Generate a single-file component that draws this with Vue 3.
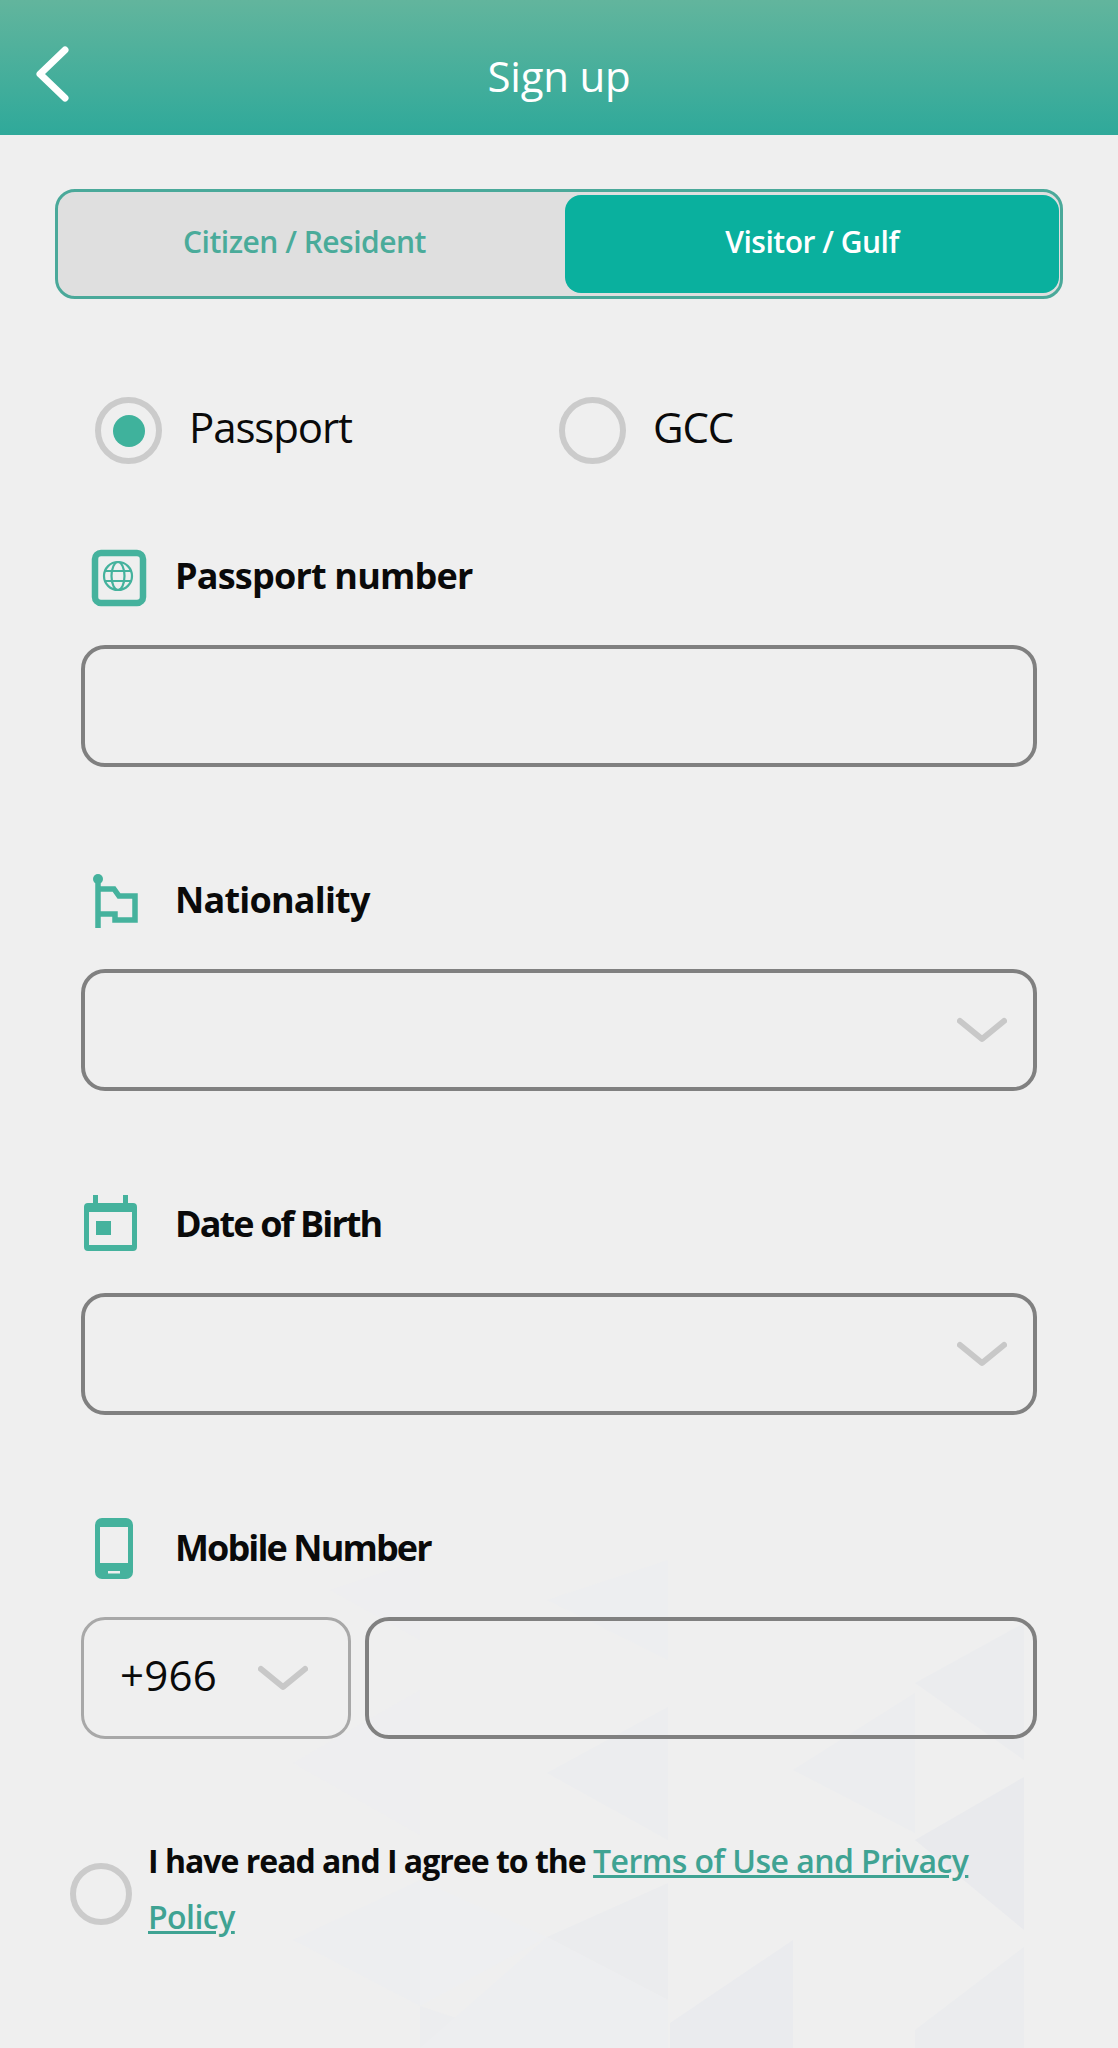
<script setup>
const triangles = [
  { points: '293,1763 420,1690 420,1835', fill: '#eeeef0' },
  { points: '330,1590 420,1560 420,1640', fill: '#eeeef0' },
  { points: '293,1940 420,1880 420,2006', fill: '#edeef0' },
  { points: '420,1880 547,1937 420,2006', fill: '#eeeff1' },
  { points: '420,2006 547,2048 420,2048', fill: '#ecedef' },
  { points: '547,1600 668,1560 668,1660', fill: '#edeef0' },
  { points: '547,1773 668,1707 668,1840', fill: '#ecedef' },
  { points: '547,1937 668,1883 668,2000', fill: '#ebecee' },
  { points: '547,1937 420,2048 668,2048 668,2000', fill: '#edeef0' },
  { points: '793,1770 915,1693 915,1833', fill: '#ecedef' },
  { points: '915,1683 1024,1623 1024,1760', fill: '#ebecee' },
  { points: '915,1840 1024,1777 1024,1930', fill: '#e9eaed' },
  { points: '670,2023 793,1940 793,2048 670,2048', fill: '#eaebee' },
  { points: '915,2030 1024,1947 1024,2048 915,2048', fill: '#ebecee' }
];
</script>

<template>
  <div class="page">
    <svg class="pattern" width="1118" height="2048" viewBox="0 0 1118 2048">
      <polygon v-for="t in triangles" :key="t.points" :points="t.points" :fill="t.fill" />
    </svg>

    <header class="top-bar">
      <svg class="back" width="60" height="80" viewBox="0 0 60 80">
        <path d="M40 10 L15 34 L40 58" fill="none" stroke="#fff" stroke-width="7" stroke-linecap="round" stroke-linejoin="round" />
      </svg>
      <h1>Sign up</h1>
    </header>

    <div class="tabs">
      <div class="tab">Citizen / Resident</div>
      <div class="tab active">Visitor / Gulf</div>
    </div>

    <div class="doc-type">
      <div class="choice">
        <span class="radio on"></span>
        <span class="choice-text">Passport</span>
      </div>
      <div class="choice">
        <span class="radio"></span>
        <span class="choice-text">GCC</span>
      </div>
    </div>

    <div class="field">
      <div class="label">
        <svg class="icon" width="96" height="64" viewBox="0 0 96 64">
          <rect x="14" y="10" width="48" height="50" rx="6" fill="none" stroke="#45b29d" stroke-width="6.5" />
          <g fill="none" stroke="#45b29d" stroke-width="2.2">
            <circle cx="37" cy="33" r="14" />
            <ellipse cx="37" cy="33" rx="6.5" ry="14" />
            <path d="M23.5 28 H50.5 M23.5 38 H50.5" />
          </g>
        </svg>
        <span class="wide">Passport number</span>
      </div>
      <div class="box"></div>
    </div>

    <div class="field">
      <div class="label">
        <svg class="icon" width="96" height="64" viewBox="0 0 96 64">
          <circle cx="17" cy="12" r="5" fill="#45b29d" />
          <path d="M17 12 V61 M17 22 H33 L38 29 H54 V53 H34 V47 H17" fill="none" stroke="#45b29d" stroke-width="5.5" />
        </svg>
        <span class="wide">Nationality</span>
      </div>
      <div class="box select">
        <svg class="chevron" width="50" height="26" viewBox="0 0 50 26">
          <path d="M3 4 L25 22 L47 4" fill="none" stroke="#c8c8c8" stroke-width="6" stroke-linecap="round" stroke-linejoin="round" />
        </svg>
      </div>
    </div>

    <div class="field">
      <div class="label">
        <svg class="icon" width="96" height="64" viewBox="0 0 96 64">
          <path fill="#45b29d" d="M12 4 H17 V12 H42 V4 H47 V12 H52 A4 4 0 0 1 56 16 V56 A4 4 0 0 1 52 60 H7 A4 4 0 0 1 3 56 V16 A4 4 0 0 1 7 12 H12 Z" />
          <rect x="8" y="21" width="43" height="33" fill="#efefef" />
          <rect x="15" y="30" width="15" height="14" fill="#45b29d" />
        </svg>
        <span>Date of Birth</span>
      </div>
      <div class="box select">
        <svg class="chevron" width="50" height="26" viewBox="0 0 50 26">
          <path d="M3 4 L25 22 L47 4" fill="none" stroke="#c8c8c8" stroke-width="6" stroke-linecap="round" stroke-linejoin="round" />
        </svg>
      </div>
    </div>

    <div class="field">
      <div class="label">
        <svg class="icon" width="96" height="64" viewBox="0 0 96 64">
          <rect x="14" y="3" width="38" height="61" rx="7" fill="#45b29d" />
          <rect x="19" y="12" width="28" height="36" fill="#efefef" />
          <rect x="27" y="56" width="12" height="2.5" fill="#efefef" />
        </svg>
        <span>Mobile Number</span>
      </div>
      <div class="phone">
        <div class="code">
          <span class="code-text">+966</span>
          <svg width="50" height="26" viewBox="0 0 50 26">
            <path d="M3 4 L25 22 L47 4" fill="none" stroke="#c8c8c8" stroke-width="6" stroke-linecap="round" stroke-linejoin="round" />
          </svg>
        </div>
        <div class="box number"></div>
      </div>
    </div>

    <div class="terms">
      <span class="radio"></span>
      <p>I have read and I agree to the <a href="#">Terms of Use and Privacy Policy</a></p>
    </div>
  </div>
</template>

<style>
html, body { margin: 0; background: #efefef; }
</style>

<style scoped>
.page {
  position: relative;
  width: 1118px;
  height: 2048px;
  overflow: hidden;
  background: #efefef;
  font-family: "Open Sans", Lato, sans-serif;
  color: #0a0a0a;
}
.pattern { position: absolute; top: 0; left: 0; }
.top-bar, .tabs, .doc-type, .field, .terms { position: relative; }

.top-bar {
  height: 135px;
  background: linear-gradient(#62b59d, #2fa99a);
  display: flex;
  align-items: center;
  justify-content: center;
}
.back { position: absolute; left: 25px; top: 40px; }
.top-bar h1 { margin: 15px 0 0; font-size: 42px; font-weight: 400; letter-spacing: -0.2px; color: #fff; }

.tabs {
  margin: 54px 55px 0;
  height: 110px;
  box-sizing: border-box;
  border: 3px solid #4aa99a;
  border-radius: 20px;
  background: #dfdfdf;
  padding: 3px 1px 3px 3px;
  display: flex;
}
.tab {
  flex: 0 0 504px;
  box-sizing: border-box;
  padding: 0 17px 6px 0;
  display: flex;
  align-items: center;
  justify-content: center;
  font-size: 30px;
  font-weight: 600;
  letter-spacing: -0.5px;
  color: #4aab9a;
}
.tab.active {
  flex: 1;
  padding: 0 0 6px;
  background: #0ab09e;
  color: #fff;
  border-radius: 16px;
}

.doc-type {
  margin: 98px 0 79px 95px;
  height: 67px;
  display: flex;
}
.choice {
  width: 464px;
  display: flex;
  align-items: center;
  gap: 27px;
  font-size: 42px;
  letter-spacing: -1.1px;
}
.choice-text { margin-top: -8px; }
.radio {
  flex: none;
  width: 67px;
  height: 67px;
  box-sizing: border-box;
  border: 6px solid #cbcbcb;
  border-radius: 50%;
  display: flex;
  align-items: center;
  justify-content: center;
}
.radio.on::after {
  content: "";
  width: 32px;
  height: 32px;
  border-radius: 50%;
  background: #3fb29c;
}

.field { margin: 0 81px 100px; }
.label {
  height: 64px;
  margin-bottom: 38px;
  display: flex;
  align-items: center;
  font-size: 36px;
  font-weight: 700;
  letter-spacing: -1.9px;
}
.label .wide { letter-spacing: -0.8px; }
.icon { flex: none; margin-right: -2px; }
.box {
  height: 122px;
  box-sizing: border-box;
  border: 4px solid #808080;
  border-radius: 24px;
}
.select {
  display: flex;
  align-items: center;
  justify-content: flex-end;
  padding-right: 26px;
}
.phone { display: flex; gap: 14px; }
.code {
  flex: 0 0 270px;
  height: 122px;
  box-sizing: border-box;
  border: 3px solid #a8a8a8;
  border-radius: 24px;
  padding: 0 40px 0 36px;
  display: flex;
  align-items: center;
  justify-content: space-between;
  font-size: 42px;
  letter-spacing: 0.2px;
}
.code-text { margin-top: -8px; }
.number { flex: 1; }

.terms {
  margin: -6px 140px 0 70px;
  display: flex;
  align-items: center;
  gap: 16px;
}
.terms .radio { width: 62px; height: 62px; margin-top: 9px; }
.terms p {
  margin: 0;
  font-size: 32px;
  font-weight: 700;
  letter-spacing: -1px;
  line-height: 56px;
}
.terms a { color: #3fa393; font-weight: 600; letter-spacing: -0.55px; }
</style>
